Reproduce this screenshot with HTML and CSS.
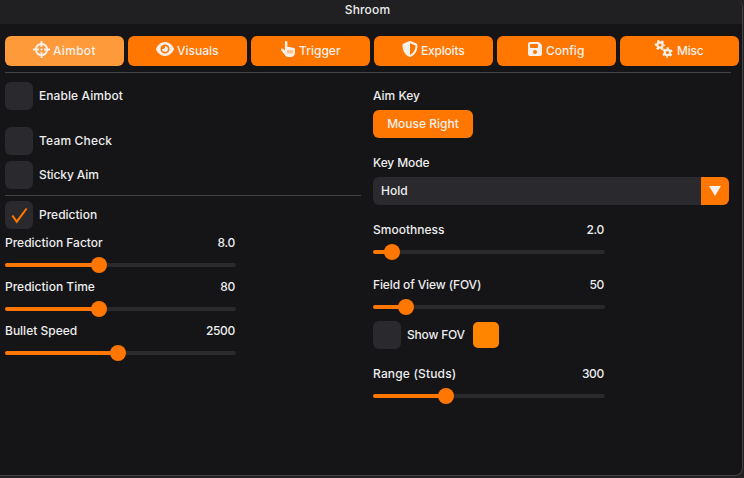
FILE: index.html
```html
<!DOCTYPE html>
<html lang="en">
<head>
<meta charset="utf-8">
<title>Shroom</title>
<link rel="stylesheet" href="styles.css">
</head>
<body>
<div class="window">
  <header class="titlebar"><span class="t wide">Shroom</span></header>
  <nav class="tabs">
    <button class="tab active">
      <svg class="i-aim" viewBox="0 0 17 17"><g fill="none" stroke="currentColor"><circle cx="8.5" cy="8.5" r="5.6" stroke-width="2"/><path d="M8.5 0v6M8.5 11v6M0 8.500h6M11 8.500h6" stroke-width="1.900"/></g><circle cx="8.5" cy="8.5" r="1.100" fill="currentColor"/></svg><span class="t wider">Aimbot</span></button>
    <button class="tab">
      <svg class="i-eye" viewBox="0 32 576 448"><path fill="currentColor" d="M288 32c-80.800 0-145.500 36.800-192.600 80.600C48.600 156 17.300 208 2.500 243.700c-3.300 7.900-3.300 16.700 0 24.600C17.300 304 48.600 356 95.400 399.400C142.500 443.200 207.200 480 288 480s145.500-36.800 192.600-80.600c46.800-43.500 78.100-95.400 93-131.100c3.300-7.900 3.300-16.700 0-24.600c-14.900-35.700-46.200-87.700-93-131.100C433.500 68.800 368.800 32 288 32zM144 256a144 144 0 1 1 288 0 144 144 0 1 1 -288 0zm144-64c0 35.300-28.700 64-64 64c-7.100 0-13.900-1.200-20.300-3.300c-5.500-1.800-11.900 1.600-11.700 7.400c.3 6.900 1.300 13.800 3.200 20.700c13.700 51.200 66.400 81.600 117.600 67.900s81.600-66.400 67.900-117.600c-11.100-41.500-47.800-69.400-88.600-71.100c-5.800-.2-9.200 6.100-7.400 11.700c2.100 6.400 3.300 13.200 3.300 20.300z"/></svg><span class="t">Visuals</span></button>
    <button class="tab">
      <svg class="i-hand" viewBox="0 0 14 16"><path fill="currentColor" d="M3.900 1.200a1.200 1.200 0 0 1 2.500 0V6c.6-.5 1.700-.4 2.100.4.700-.5 1.700-.3 2.100.4.500-.2 1-.2 1.500 0 1.100.1 1.900.7 1.900 1.700v3.200c0 2.500-1.900 4.300-4.300 4.300H7.500c-1.300 0-2.400-.5-3.200-1.500L.4 9.500C-.7 8 1.200 6.600 2.400 8l1.500 1.600z"/><path class="cut" d="M6 9.200h6v3.300H6z"/></svg><span class="t">Trigger</span></button>
    <button class="tab">
      <svg class="i-shield" viewBox="0 0 16 16"><path fill="currentColor" fill-rule="evenodd" d="M7.600.1a1 1 0 0 1 .8 0l6 2.500c.7.300 1.100.9 1.100 1.600 0 4.200-1.600 9.300-6.700 11.600a1.900 1.900 0 0 1-1.600 0C2.100 13.500.5 8.400.5 4.200c0-.7.400-1.300 1.100-1.600zM8 2.200v11.700c3.900-1.900 5.400-5.700 5.500-9.400z"/></svg><span class="t tight">Exploits</span></button>
    <button class="tab">
      <svg class="i-save" viewBox="0 0 14 14"><path fill="currentColor" fill-rule="evenodd" d="M2 0h8.200c.5 0 1 .2 1.400.6l1.800 1.800c.4.400.6.9.6 1.400V12a2 2 0 0 1-2 2H2a2 2 0 0 1-2-2V2a2 2 0 0 1 2-2zM3 2a1 1 0 0 0-1 1v2a1 1 0 0 0 1 1h6a1 1 0 0 0 1-1V3a1 1 0 0 0-1-1zM7 8a2 2 0 1 0 0 4 2 2 0 0 0 0-4z"/></svg><span class="t">Config</span></button>
    <button class="tab">
      <svg class="i-gears" viewBox="0 0 20 20"><g fill="none" stroke="currentColor"><g id="gear"><circle cx="6" cy="6" r="2.700" stroke-width="2.200"/><circle cx="6" cy="6" r="4.200" stroke-width="2" stroke-dasharray="2.300 2.098" stroke-dashoffset="1.150"/></g><use href="#gear" transform="translate(19.500 7.500) rotate(90)"/></g></svg><span class="t tight">Misc</span></button>
  </nav>
  <hr class="rule rule-top">
  <main class="columns">
    <section class="left">
      <label class="check"><i class="box"></i><span class="t enable">Enable Aimbot</span></label>
      <label class="check gap-17"><i class="box"></i><span class="t wide">Team Check</span></label>
      <label class="check gap-6"><i class="box"></i><span class="t snug">Sticky Aim</span></label>
      <hr class="rule">
      <label class="check gap-5"><i class="box"><svg viewBox="0 0 28 28"><path d="M7.300 14.500l4.500 6.200L21.600 7.500" fill="none" stroke="#ff7800" stroke-width="2"/></svg></i><span class="t">Prediction</span></label>
      <div class="slider"><div class="row"><span class="t">Prediction Factor</span><span class="t num">8.0</span></div><div class="track"><div class="fill" style="width:94px"></div></div></div>
      <div class="slider gap-11"><div class="row"><span class="t">Prediction Time</span><span class="t num">80</span></div><div class="track"><div class="fill" style="width:94px"></div></div></div>
      <div class="slider gap-11"><div class="row"><span class="t">Bullet Speed</span><span class="t num">2500</span></div><div class="track"><div class="fill" style="width:113.300px"></div></div></div>
    </section>
    <section class="right">
      <div class="field"><span class="t">Aim Key</span></div>
      <button class="key"><span class="t">Mouse Right</span></button>
      <div class="field mode"><span class="t snug">Key Mode</span></div>
      <div class="select"><span class="t">Hold</span><span class="arrow"><svg viewBox="0 0 12 10"><path d="M0 0h12L6 10z" fill="#f4f0ee"/></svg></span></div>
      <div class="slider gap-16"><div class="row"><span class="t">Smoothness</span><span class="t num">2.0</span></div><div class="track"><div class="fill" style="width:19.300px"></div></div></div>
      <div class="slider gap-22"><div class="row"><span class="t snug">Field of View (FOV)</span><span class="t num">50</span></div><div class="track"><div class="fill" style="width:32.500px"></div></div></div>
      <div class="check gap-12"><i class="box"></i><span class="t tight">Show FOV</span><i class="swatch"></i></div>
      <div class="slider gap-16"><div class="row"><span class="t wide">Range (Studs)</span><span class="t num">300</span></div><div class="track"><div class="fill" style="width:72.500px"></div></div></div>
    </section>
  </main>
</div>
</body>
</html>
```
FILE: styles.css
```css
* { box-sizing: border-box; }
body { margin: 0; width: 744px; height: 478px; overflow: hidden; background: #232122; color: #ededee; font: 500 12px/18px Inter, "Liberation Sans", sans-serif; }
.window { width: 743px; height: 476px; background: #151517; border: solid #434345; border-width: 0 1px 1px 0; border-radius: 0 8px 8px 0; overflow: hidden; }
.titlebar { height: 24px; background: #202022; display: flex; justify-content: center; padding: 1px 7px 0 0; }
.t { white-space: nowrap; display: block; }
.wide { letter-spacing: .17px; }
.enable { letter-spacing: .08px; }
.wider { letter-spacing: .3px; }
.snug { letter-spacing: -.12px; }
.tight { letter-spacing: -.2px; }
.num { letter-spacing: -.3px; padding-right: 1px; }
.tabs { display: flex; gap: 4px; padding: 12px 0 0 5px; }
.tab { width: 119px; height: 30px; flex: none; border: 0; border-radius: 6px; background: #ff7600; color: #f6f0ec; font: inherit; padding: 0; display: flex; align-items: center; }
.tab.active { background: #ff9a3b; }
.tab svg { flex: none; display: block; }
.i-aim { width: 17px; height: 17px; margin: -4px 3.5px 0 27.5px; }
.i-eye { width: 18px; height: 14px; margin: -4px 3px 0 28px; }
.i-hand { width: 14px; height: 16px; margin: -4px 4px 0 30px; }
.cut { fill: #ffc08a; }
.i-shield { width: 16px; height: 16px; margin: -4px 3px 0 28px; }
.i-save { width: 14px; height: 14px; margin: -4px 4px 0 31px; }
.i-gears { width: 20px; height: 20px; margin: -4px 3px 0 34px; }
.rule { border: 0; height: 1px; background: #454547; margin: 6px 0 0; width: 356px; }
.rule-top { width: 726px; margin-left: 5px; }
.columns { display: flex; padding-left: 5px; }
.left { width: 368px; padding-top: 9px; }
.right { width: 356px; padding-top: 14px; }
.check { display: flex; align-items: center; height: 28px; }
.box { width: 28px; height: 28px; border-radius: 6px; background: #2a2a2e; margin-right: 6px; }
.box svg { display: block; }
.slider { width: 231px; }
.right .slider { width: 232px; }
.row { display: flex; justify-content: space-between; height: 18px; margin-bottom: 11px; }
.left .row { margin-top: 5px; }
.track { height: 4px; border-radius: 2px; background: #2a2a2d; }
.fill { height: 4px; border-radius: 2px; background: #ff7600; position: relative; }
.fill::after { content: ""; position: absolute; right: -8px; top: -6px; width: 16px; height: 16px; border-radius: 50%; background: #ff7600; }
.gap-17 { margin-top: 17px; }
.gap-6 { margin-top: 6px; }
.gap-5 { margin-top: 5px; }
.gap-11 { margin-top: 11px; }
.gap-16 { margin-top: 16px; }
.gap-22 { margin-top: 22px; }
.gap-12 { margin-top: 12px; }
.field { height: 18px; }
.mode { margin-top: 16px; }
.key { display: flex; align-items: center; justify-content: center; width: 100px; height: 28px; margin-top: 5px; border: 0; border-radius: 6px; background: #ff7600; color: #f6f0ec; font: inherit; padding: 0; }
.select { display: flex; align-items: center; justify-content: space-between; height: 28px; margin-top: 5px; padding-left: 8px; background: #2a2a2e; border-radius: 6px; overflow: hidden; }
.arrow { width: 28px; height: 28px; background: #ff7600; display: flex; align-items: center; justify-content: center; }
.arrow svg { width: 12px; height: 10px; }
.swatch { width: 26px; height: 26px; border-radius: 5px; background: #ff8400; margin-left: 8px; }
```
